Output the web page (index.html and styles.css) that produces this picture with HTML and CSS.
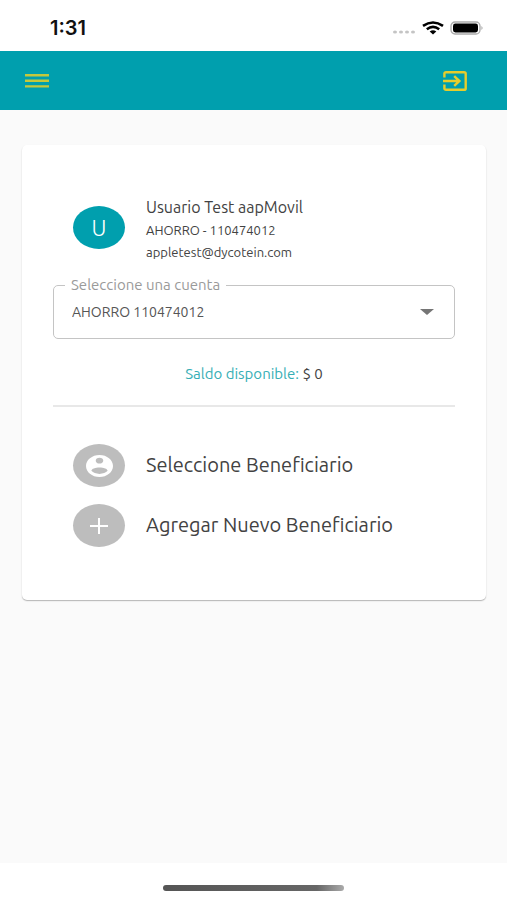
FILE: index.html
```html
<!DOCTYPE html>
<html lang="es">
<head>
<meta charset="utf-8">
<meta name="viewport" content="width=device-width, initial-scale=1">
<title>Beneficiarios</title>
<link rel="stylesheet" href="styles.css">
</head>
<body>
<div class="status">
  <span class="time">1:31</span>
  <div class="indicators">
    <svg width="24" height="6" viewBox="0 0 24 6" fill="#c4c4c4"><ellipse cx="3" cy="3" rx="2" ry="1.6"/><ellipse cx="9" cy="3" rx="2" ry="1.6"/><ellipse cx="15" cy="3" rx="2" ry="1.6"/><ellipse cx="21" cy="3" rx="2" ry="1.6"/></svg>
    <svg class="wifi" width="22" height="14" viewBox="0 0 22 14" fill="none" stroke="#000" stroke-width="2.6"><path d="M1 4.9Q11-1.9 21 4.9"/><path d="M4.8 8.2Q11 3.6 17.2 8.2"/><path d="M7.7 10.6Q11 8 14.3 10.6L11 13.6Z" fill="#000" stroke="none"/></svg>
    <svg width="34" height="14" viewBox="0 0 34 14"><rect x="1" y="1" width="29" height="12" rx="4" fill="#fff" stroke="#aaa" stroke-width="1.3"/><rect x="3" y="2.6" width="25" height="8.8" rx="2.4"/><path d="M31.5 5q2 2 0 4Z" fill="#999"/></svg>
  </div>
</div>
<header class="bar">
  <button class="icon-button" aria-label="Menú"><svg width="24" height="14" viewBox="0 0 24 14" fill="#c4c83c"><path d="M0 0h24v2.4H0zM0 5.6h24V8H0zM0 11.2h24v2.4H0z"/></svg></button>
  <button class="icon-button" aria-label="Salir"><svg width="24" height="20" viewBox="0 0 24 20" fill="none" stroke="#e6cd2c" stroke-width="2.4"><path d="M1.4 6.6V2.6Q1.4 1.2 3 1.2H21Q22.7 1.2 22.7 2.6V17.4Q22.7 18.8 21 18.8H3Q1.4 18.8 1.4 17.4V13.4"/><path d="M0 10H16M11.2 5.2L16.4 10L11.2 14.8"/></svg></button>
</header>
<main class="content">
  <section class="card">
    <div class="row profile">
      <span class="avatar user">U</span>
      <div>
        <div class="name">Usuario Test aapMovil</div>
        <div class="detail">AHORRO - 110474012</div>
        <div class="detail">appletest@dycotein.com</div>
      </div>
    </div>
    <fieldset class="field">
      <legend><label for="account">Seleccione una cuenta</label></legend>
      <div class="select-wrap">
        <select id="account"><option>AHORRO 110474012</option></select>
        <svg width="14" height="6" viewBox="0 0 14 6" fill="#757575"><path d="M0 0h14L7 6z"/></svg>
      </div>
    </fieldset>
    <p class="balance"><span>Saldo disponible:</span> $ 0</p>
    <hr>
    <nav class="actions">
      <a class="row" href="#seleccionar">
        <span class="avatar"><svg width="27" height="22" viewBox="2 2 20 20" preserveAspectRatio="none" fill="#fff"><path d="M12 2C6.48 2 2 6.48 2 12s4.48 10 10 10 10-4.48 10-10S17.52 2 12 2zm0 2.6c1.66 0 2.8 1.2 2.8 2.6s-1.14 2.6-2.8 2.6-2.8-1.2-2.8-2.6 1.14-2.6 2.8-2.6zm0 14.6c-2.5 0-4.71-1.1-6-2.8.03-1.99 3-3.1 6-3.1s5.97 1.11 6 3.1c-1.29 1.7-3.5 2.8-6 2.8z"/></svg></span>
        <span class="action">Seleccione Beneficiario</span>
      </a>
      <a class="row" href="#agregar">
        <span class="avatar"><svg width="18" height="16" viewBox="0 0 18 16" fill="none" stroke="#fff" stroke-width="2"><path d="M0 8h18M9 0v16"/></svg></span>
        <span class="action">Agregar Nuevo Beneficiario</span>
      </a>
    </nav>
  </section>
</main>
<footer class="home"><span></span></footer>
</body>
</html>
```
FILE: styles.css
```css
* { box-sizing: border-box; }
body {
  margin: 0;
  min-height: 100vh;
  display: flex;
  flex-direction: column;
  background: #fff;
  color: #424242;
  font-family: Ubuntu, "Noto Sans", sans-serif;
}
svg { display: block; flex: none; }
.status {
  display: flex;
  justify-content: space-between;
  align-items: center;
  height: 51px;
  padding: 4px 23px 0 50px;
}
.time { font: 600 20px/24px Inter, sans-serif; color: #111; }
.indicators { display: flex; align-items: center; }
.indicators svg:first-child { margin-top: 8px; }
.wifi { margin: 0 6px; }
.bar {
  display: flex;
  justify-content: space-between;
  align-items: center;
  height: 59px;
  padding: 0 40px 0 25px;
  background: #009fae;
}
.icon-button { padding: 0; border: 0; background: none; }
.content { flex: 1; padding: 35px 21px 35px 22px; background: #fafafa; }
.card {
  padding: 50px 31px 53px;
  border-radius: 5px;
  background: #fff;
  box-shadow: 0 1px 1px rgba(0, 0, 0, .22), 0 1px 2px rgba(0, 0, 0, .08);
}
.row {
  display: flex;
  align-items: center;
  gap: 21px;
  padding-left: 20px;
  color: inherit;
  text-decoration: none;
}
.avatar {
  display: flex;
  flex: none;
  align-items: center;
  justify-content: center;
  width: 52px;
  height: 43px;
  border-radius: 50%;
  background: #bdbdbd;
}
.profile { align-items: flex-start; }
.user { margin-top: 11px; background: #009fae; color: #fff; font-size: 22px; font-weight: 300; }
.name { font-size: 16px; line-height: 24px; }
.detail { font-size: 13px; line-height: 22px; }
.field {
  min-width: 0;
  margin: 12px 0 0;
  padding: 0 20px 0 11px;
  border: 1px solid #c4c4c4;
  border-radius: 5px;
}
.field legend { padding: 0 6px; color: #9a9a9a; font-size: 15px; line-height: 20px; }
.select-wrap { display: flex; align-items: center; height: 43px; padding: 0 0 10px; }
.select-wrap select {
  flex: 1;
  padding: 0 7px;
  border: 0;
  appearance: none;
  background: none;
  color: #555;
  font: 14px/20px Ubuntu, "Noto Sans", sans-serif;
}
.balance { margin: 25px 0 21px; text-align: center; font-size: 15px; line-height: 20px; }
.balance span { color: #36aeb5; }
hr { height: 2px; margin: 0; border: 0; background: #e8e8e8; }
.actions { display: grid; gap: 17px; padding-top: 37px; }
.action { padding-bottom: 1px; font-size: 20px; line-height: 24px; }
.home { display: flex; justify-content: center; padding: 22px 0 9px; }
.home span {
  width: 181px;
  height: 6px;
  border-radius: 3px;
  background: linear-gradient(90deg, #555 0, #666 85%, #aaa 100%);
}
```
